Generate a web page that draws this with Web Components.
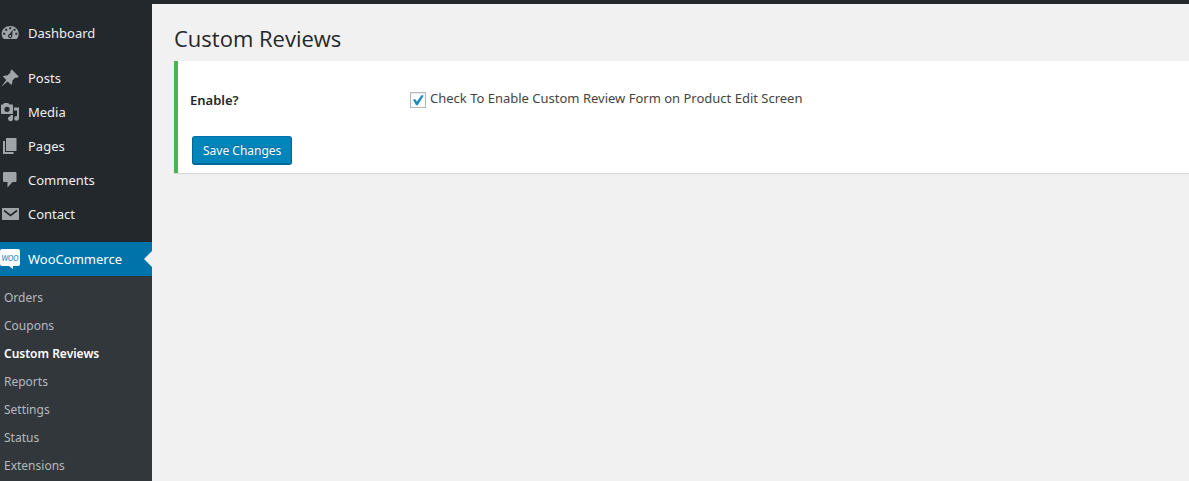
<!DOCTYPE html>
<html lang="en">
<head>
<meta charset="utf-8">
<meta name="viewport" content="width=device-width, initial-scale=1">
<title>Custom Reviews</title>
<style>
  html, body { height: 100%; }
  body { margin: 0; background: #f1f1f1; font-family: "Noto Sans", "Open Sans", sans-serif; font-size: 13px; color: #444; }
</style>
</head>
<body>
<admin-shell>
  <admin-menu slot="menu">
    <menu-item icon="dashboard">Dashboard</menu-item>
    <menu-gap></menu-gap>
    <menu-item icon="pin">Posts</menu-item>
    <menu-item icon="media">Media</menu-item>
    <menu-item icon="pages">Pages</menu-item>
    <menu-item icon="comment">Comments</menu-item>
    <menu-item icon="mail">Contact</menu-item>
    <menu-gap></menu-gap>
    <menu-item icon="woo" current>WooCommerce</menu-item>
    <sub-menu>
      <sub-item>Orders</sub-item>
      <sub-item>Coupons</sub-item>
      <sub-item current>Custom Reviews</sub-item>
      <sub-item>Reports</sub-item>
      <sub-item>Settings</sub-item>
      <sub-item>Status</sub-item>
      <sub-item>Extensions</sub-item>
    </sub-menu>
  </admin-menu>
  <settings-page heading="Custom Reviews">
    <review-settings></review-settings>
  </settings-page>
</admin-shell>

<script>
const define = (name, html, setup) => {
  const template = document.createElement('template');
  template.innerHTML = html;
  customElements.define(name, class extends HTMLElement {
    constructor() {
      super();
      this.attachShadow({ mode: 'open' }).append(template.content.cloneNode(true));
    }
    connectedCallback() { if (setup) setup(this, this.shadowRoot); }
  });
};

const icons = {
  dashboard: `<path fill-rule="evenodd" d="M3.8 16h12.800c1.400-1.400 2.100-3.200 2.100-5C18.700 6 14.900 3 10.200 3S1.700 6 1.700 11c0 1.800.7 3.600 2.100 5zM9.200 4.200h2v2h-2zM5.200 5.700h2v2h-2zM13.500 5.700h2v2h-2zM3.200 9.800h2v2h-2zM15.300 9.800h2v2h-2zM12.700 6.800L12.200 13c0 1.300-.8 2.200-2 2.200S8 14.300 8 13.100c0-1 .7-1.800 1.600-2zM10.100 12.100a1 1 0 1 0 .1 2 1 1 0 0 0-.1-2z"/>`,
  pin: `<path d="M10.400 3l1.400-1.500 6.900 6.900-1.500 1.400c-1-.1-1.800 0-2.400.3l-2.500 2.700c.2 1.700-.1 3-1 4.300L7.700 13.500 1 19l5.300-6.900L2.800 8.600c1.300-.9 2.700-1.300 4.400-1l2.900-2.500c.3-.7.4-1.400.3-2.100z"/>`,
  media: `<path fill-rule="evenodd" d="M3 2.500L4.200 1h4L9.500 2.500H12c.6 0 1 .4 1 1V11c0 .6-.4 1-1 1H2c-.6 0-1-.4-1-1V3.500c0-.6.400-1 1-1zM7 4.700a2.600 2.600 0 1 0 0 5.200 2.600 2.600 0 0 0 0-5.200z"/><path d="M14 5.500h5v10.800a2.400 2.400 0 1 1-2-2.300V8.500h-3zM10.500 13H13v3.600a2.500 2.500 0 1 1-2.500-2.400z"/>`,
  pages: `<path d="M6 2h10.500v13H6zM3 5h2v11h8.500v2H3z"/>`,
  comment: `<path d="M4.500 2h10.500C16 2 16.500 2.500 16.500 3.500v7c0 1-.5 1.500-1.500 1.500h-2.500L7.500 17.500V12h-3C3.500 12 3 11.500 3 10.500v-7C3 2.500 3.500 2 4.500 2z"/>`,
  mail: `<path d="M3 4h15c.6 0 1 .4 1 1v10c0 .6-.4 1-1 1H3c-.6 0-1-.4-1-1V5c0-.6.4-1 1-1z"/><path d="M4 6.500l6.500 5 6.500-5" fill="none" stroke="#23282d" stroke-width="1.600"/>`,
  woo: `<path d="M2 0h16a2 2 0 0 1 2 2v13a2 2 0 0 1-2 2h-5v3l-4-3H2a2 2 0 0 1-2-2V2a2 2 0 0 1 2-2z" fill="#fff"/><text x="10" y="12" text-anchor="middle" font-family="Lato, sans-serif" font-size="7" font-style="italic" font-weight="400" fill="#0073aa">WOO</text>`
};

define('admin-shell', `
  <style>
    :host { display: grid; grid-template-columns: 152px 1fr; box-sizing: border-box; min-height: 100%; height: 100%; overflow: hidden; border-top: 4px solid #23282d; }
    main { min-width: 0; padding: 19px 0 20px 22px; }
  </style>
  <slot name="menu"></slot>
  <main><slot></slot></main>`);

define('admin-menu', `
  <style>
    :host { display: block; background: #23282d; padding-top: 12px; }
    nav { display: flex; flex-direction: column; min-height: 100%; }
  </style>
  <nav aria-label="Main menu"><slot></slot></nav>`);

define('menu-gap', `<style>:host { display: block; height: 11px; }</style>`);

define('menu-item', `
  <style>
    :host { display: block; position: relative; color: #eee; --icon: #a0a5aa; }
    a { display: flex; align-items: center; gap: 8px; height: 34px; color: inherit; text-decoration: none; font-size: 13px; line-height: 18px; }
    svg { width: 20px; height: 20px; fill: var(--icon); flex: none; }
    :host([current]) { background: #0073aa; color: #fff; }
    :host([current])::after { content: ""; position: absolute; right: 0; top: 9px; border: 8px solid transparent; border-left: 0; border-right-color: #f1f1f1; }
  </style>
  <a href="#"><svg viewBox="0 0 20 20" aria-hidden="true"></svg><span><slot></slot></span></a>`,
  (host, root) => { root.querySelector('svg').innerHTML = icons[host.getAttribute('icon')]; });

define('sub-menu', `
  <style>:host { display: block; flex: 1; background: #32373c; padding: 8px 0; }</style>
  <slot></slot>`);

define('sub-item', `
  <style>
    :host { display: block; color: #b4b9be; }
    a { display: block; padding: 5px 4px; line-height: 18px; font-size: 12px; color: inherit; text-decoration: none; }
    :host([current]) { color: #fff; font-weight: 600; }
  </style>
  <a href="#"><slot></slot></a>`);

define('settings-page', `
  <style>
    :host { display: block; }
    h1 { margin: 0 0 8px; font-family: "Open Sans", sans-serif; font-size: 22px; font-weight: 400; line-height: 30px; color: #23282d; }
    section { background: #fff; border-left: 4px solid #46b450; box-shadow: 0 1px 1px rgba(0,0,0,.1); padding: 28px 12px 8px; }
  </style>
  <h1></h1>
  <section><slot></slot></section>`,
  (host, root) => { root.querySelector('h1').textContent = host.getAttribute('heading'); });

define('review-settings', `
  <style>
    :host { display: block; }
    .row { display: grid; grid-template-columns: 220px 1fr; align-items: start; margin-bottom: 25px; }
    .name { font-weight: 600; font-size: 13px; line-height: 22px; color: #23282d; }
    .option { display: flex; gap: 4px; font-size: 13px; line-height: 18px; }
    input { appearance: none; flex: none; width: 16px; height: 16px; margin: 3px 0 0; border: 1px solid #b4b9be; background: #fff; box-shadow: inset 0 1px 2px rgba(0,0,0,.1); }
    input:checked::before { content: ""; display: block; width: 12px; height: 12px; margin: 1px; background: #1e8cbe; clip-path: polygon(8% 48%, 25% 42%, 41% 62%, 80% 8%, 98% 14%, 47% 94%, 34% 94%); }
    button { display: block; margin: 0 0 0 2px; height: 29px; padding: 0 10px; font: inherit; font-size: 12px; line-height: 26px; color: #fff; background: #0085ba; border: 1px solid #006799; border-top-color: #0073aa; border-radius: 3px; box-shadow: inset 0 -1px 0 #006799; text-shadow: 0 -1px 1px #006799; }
  </style>
  <form>
    <div class="row">
      <label class="name" for="enable">Enable?</label>
      <label class="option"><input type="checkbox" id="enable" checked><span>Check To Enable Custom Review Form on Product Edit Screen</span></label>
    </div>
    <button type="button">Save Changes</button>
  </form>`);
</script>
</body>
</html>
